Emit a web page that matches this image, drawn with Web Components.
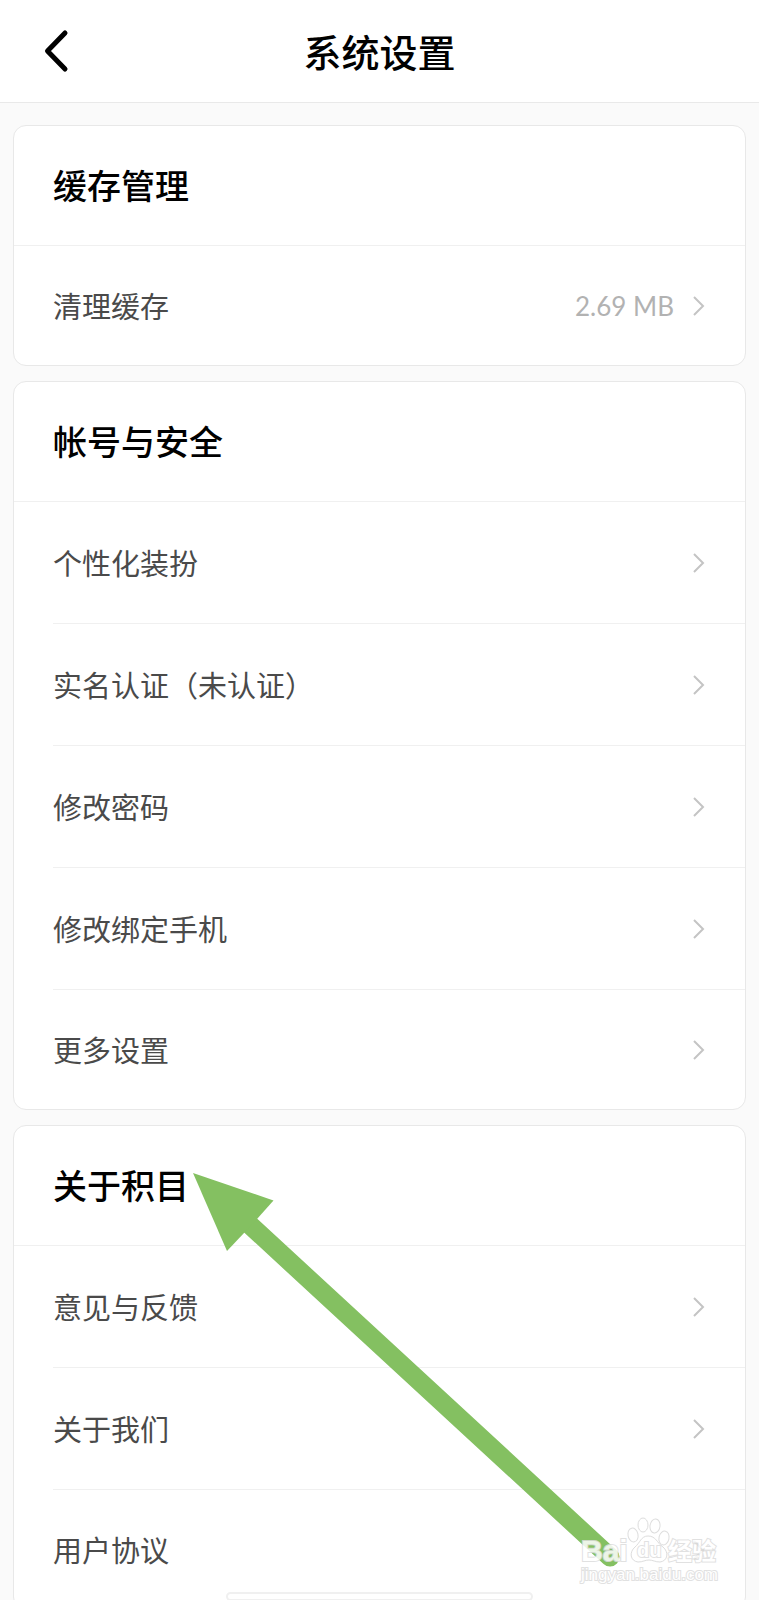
<!DOCTYPE html>
<html lang="zh-CN">
<head>
<meta charset="UTF-8">
<meta name="viewport" content="width=device-width, initial-scale=1">
<title>系统设置</title>
<style>
  body{margin:0;background:#fafafa;color:#000;
    font-family:"Noto Sans","Noto Sans CJK SC",sans-serif}
</style>
</head>
<body>
<settings-app>
  <nav-bar slot="header">系统设置</nav-bar>
  <settings-card heading="缓存管理">
    <settings-row value="2.69 MB">清理缓存</settings-row>
  </settings-card>
  <settings-card heading="帐号与安全">
    <settings-row>个性化装扮</settings-row>
    <settings-row>实名认证（未认证）</settings-row>
    <settings-row>修改密码</settings-row>
    <settings-row>修改绑定手机</settings-row>
    <settings-row>更多设置</settings-row>
  </settings-card>
  <settings-card heading="关于积目">
    <settings-row>意见与反馈</settings-row>
    <settings-row>关于我们</settings-row>
    <settings-row>用户协议</settings-row>
  </settings-card>
  <home-indicator slot="overlay"></home-indicator>
  <guide-arrow slot="overlay"></guide-arrow>
  <brand-mark slot="overlay"></brand-mark>
</settings-app>

<script>
(() => {
  // Shared helper: register an element whose shadow root is a fixed template.
  const define = (name, html, setup) => {
    const tpl = document.createElement('template');
    tpl.innerHTML = html;
    customElements.define(name, class extends HTMLElement {
      connectedCallback() {
        if (this.shadowRoot) return;
        const root = this.attachShadow({ mode: 'open' });
        root.appendChild(tpl.content.cloneNode(true));
        if (setup) setup(this, root);
      }
    });
  };

  define('settings-app', `
    <style>
      :host{position:relative;display:flex;flex-direction:column;height:100vh;overflow:hidden}
      main{flex:1;min-height:0;overflow-y:auto;scrollbar-width:none;
        display:flex;flex-direction:column;gap:15px;padding:22px 13px}
    </style>
    <slot name="header"></slot>
    <main><slot></slot></main>
    <slot name="overlay"></slot>`);

  define('nav-bar', `
    <style>
      :host{display:block;background:#fff;border-bottom:1px solid #e9e9e9}
      header{display:grid;grid-template-columns:1fr auto 1fr;align-items:center;height:102px}
      button{justify-self:start;display:flex;margin:0 0 0 36px;padding:8px;border:0;background:none;cursor:pointer}
      svg{width:26px;height:44px}
      h1{margin:0;font-size:38px;line-height:48px;font-weight:500;
        font-family:"Noto Sans CJK SC",sans-serif}
    </style>
    <header>
      <button aria-label="返回"><svg viewBox="0 0 26 44" fill="none" stroke="#000" stroke-width="5"
        stroke-linecap="round" stroke-linejoin="round"><path d="M21 4 3.500 22 21 40"/></svg></button>
      <h1><slot></slot></h1>
    </header>`);

  define('settings-card', `
    <style>
      :host{display:block;flex:none;background:#fff;border:1px solid #e8e8e8;border-radius:13px;overflow:hidden}
      h2{display:flex;align-items:center;box-sizing:border-box;height:120px;margin:0;padding:0 0 2px 39px;
        border-bottom:1px solid #f0f0f0;font-size:34px;line-height:44px;font-weight:500;
        font-family:"Noto Sans CJK SC",sans-serif}
    </style>
    <h2></h2>
    <slot></slot>`, (el, root) => {
      root.querySelector('h2').textContent = el.getAttribute('heading');
    });

  define('settings-row', `
    <style>
      :host{display:block;padding-left:39px}
      button{display:flex;align-items:center;box-sizing:border-box;width:100%;height:122px;
        padding:0 40px 0 0;border:0;border-bottom:1px solid #f0f0f0;background:none;
        color:#4a4a4a;font:400 29px/40px "Noto Sans CJK SC",sans-serif;text-align:left;cursor:pointer}
      :host(:last-child) button{height:119px;border-bottom:0}
      .label{flex:1;padding-bottom:2px}
      .value{margin-right:18px;color:#b2b2b2;font:400 26px/40px Lato,sans-serif}
      svg{flex:none;width:13px;height:22px}
    </style>
    <button>
      <span class="label"><slot></slot></span>
      <span class="value"></span>
      <svg viewBox="0 0 13 22" fill="none" stroke="#c4c4c4" stroke-width="2"><path d="M2 2 11 11 2 20"/></svg>
    </button>`, (el, root) => {
      root.querySelector('.value').textContent = el.getAttribute('value') || '';
    });

  define('home-indicator', `
    <style>
      :host{position:absolute;left:0;right:0;bottom:-1px;display:flex;justify-content:center}
      div{width:40%;height:5px;border:2px solid #f0f0f0;border-radius:5px;background:#fff}
    </style>
    <div></div>`);

  define('guide-arrow', `
    <style>
      :host{position:absolute;left:193px;top:1173px;pointer-events:none}
      svg{display:block;width:430px;height:400px}
    </style>
    <svg viewBox="193 1173 430 400">
      <path d="M250 1225 610 1557" stroke="#84c061" stroke-width="19" stroke-linecap="round"/>
      <path d="M193 1173 273.500 1200.500 257 1219 244 1233 227 1251Z" fill="#84c061"/>
    </svg>`);

  define('brand-mark', `
    <style>
      :host{position:absolute;right:38px;bottom:10px;pointer-events:none}
      svg{display:block;width:142px;height:76px;opacity:.85}
      text{fill:#fff;stroke:#dcdcdc;stroke-width:2;paint-order:stroke}
      .latin{font:700 30px "Liberation Sans",sans-serif}
      .du{font:700 20px "Liberation Sans",sans-serif}
      .cjk{font:700 24px "Noto Sans CJK SC",sans-serif}
      .url{font:400 17px "Liberation Sans",sans-serif}
    </style>
    <svg viewBox="0 0 142 76">
      <g fill="#fff" stroke="#d8d8d8">
        <ellipse cx="54" cy="21" rx="5" ry="7" transform="rotate(-12 54 21)"/>
        <ellipse cx="64" cy="11" rx="5" ry="7"/>
        <ellipse cx="76" cy="12" rx="5" ry="7" transform="rotate(8 76 12)"/>
        <ellipse cx="85" cy="24" rx="5" ry="7" transform="rotate(12 85 24)"/>
        <path d="M69 22C62 22 61 29 56 33 50 38 51 47 59 48 64 48 66 46 70 46 74 46 76 48 81 48 89 47 90 38 84 33 78 29 77 22 69 22Z"/>
      </g>
      <text class="latin" x="2" y="47">Bai</text>
      <text class="du" x="58" y="43">du</text>
      <text class="cjk" x="89" y="46">经验</text>
      <text class="url" x="2" y="66">jingyan.baidu.com</text>
    </svg>`);
})();
</script>
</body>
</html>
